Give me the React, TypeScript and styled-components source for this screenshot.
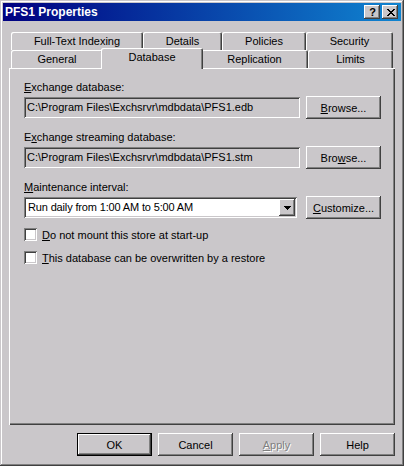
import React from "react";
import styled, { createGlobalStyle } from "styled-components";

const FACE = "#cac7ca";

const GlobalStyle = createGlobalStyle`
  html, body { margin: 0; padding: 0; background: ${FACE}; }
  body { font-family: "Liberation Sans", Arial, sans-serif; font-size: 11px; color: #000; }
  * { box-sizing: border-box; }
`;

const raisedShadow = `inset -1px -1px #404040, inset 1px 1px #ffffff, inset -2px -2px #808080, inset 2px 2px ${FACE}`;
const sunkenShadow = `inset 1px 1px #808080, inset -1px -1px #ffffff, inset 2px 2px #404040, inset -2px -2px ${FACE}`;

const Window = styled.div`
  width: 404px;
  height: 466px;
  padding: 3px;
  display: flex;
  flex-direction: column;
  background: ${FACE};
  box-shadow: inset -1px -1px #404040, inset 1px 1px ${FACE}, inset -2px -2px #808080, inset 2px 2px #ffffff;
`;

const TitleBar = styled.div`
  height: 18px;
  display: flex;
  align-items: center;
  padding: 0 3px 0 2px;
  background: linear-gradient(90deg, #000080 0%, #1084d0 100%);
`;

const Title = styled.span`
  color: #fff;
  font-weight: bold;
  font-size: 12px;
  line-height: 18px;
`;

const CaptionButtons = styled.div`
  margin-left: auto;
  display: flex;
  gap: 2px;
`;

const CaptionButton = styled.div`
  width: 16px;
  height: 14px;
  background: ${FACE};
  box-shadow: ${raisedShadow};
  display: flex;
  align-items: center;
  justify-content: center;
  font-weight: bold;
  font-size: 11px;
  line-height: 14px;
  padding-left: 1px;
`;

const TabStrip = styled.div`
  margin: 11px 6px 0;
  padding: 0 2px;
  display: flex;
  flex-direction: column;
`;

const TabRow = styled.div`
  height: 18px;
  display: flex;
  align-items: flex-start;
`;

const Tab = styled.div<{ $w: number; $selected?: boolean }>`
  width: ${(p) => p.$w}px;
  height: ${(p) => (p.$selected ? 21 : 18)}px;
  margin: ${(p) => (p.$selected ? "-2px -2px -1px -2px" : "0")};
  padding-bottom: ${(p) => (p.$selected ? 4 : 0)}px;
  position: ${(p) => (p.$selected ? "relative" : "static")};
  z-index: ${(p) => (p.$selected ? 1 : "auto")};
  background: ${FACE};
  display: flex;
  align-items: center;
  justify-content: center;
  white-space: nowrap;
  border-radius: 2px 2px 0 0;
  box-shadow: inset 1px 1px #ffffff, inset -1px 0 #404040, inset -2px 0 #808080;
`;

const Panel = styled.div`
  margin: 0 6px;
  height: 357px;
  background: ${FACE};
  box-shadow: inset 1px 1px #ffffff, inset -1px -1px #404040, inset -2px -2px #808080;
  padding: 13px 14px 0 15px;
  display: flex;
  flex-direction: column;
`;

const Label = styled.div<{ $top?: number }>`
  line-height: 13px;
  height: 13px;
  margin-top: ${(p) => p.$top ?? 0}px;
  margin-bottom: 2px;
  white-space: nowrap;
`;

const Key = styled.span`
  text-decoration: underline;
  text-underline-offset: 1px;
`;

const FieldRow = styled.div`
  height: 23px;
  display: flex;
  align-items: center;
  justify-content: space-between;
`;

const Field = styled.div`
  width: 276px;
  height: 21px;
  background: ${FACE};
  box-shadow: ${sunkenShadow};
  padding: 0 3px;
  line-height: 21px;
  white-space: nowrap;
  overflow: hidden;
`;

const Combo = styled.div`
  width: 273px;
  height: 21px;
  background: #fff;
  box-shadow: ${sunkenShadow};
  padding: 2px 2px 2px 4px;
  display: flex;
  align-items: center;
`;

const ComboText = styled.span`
  flex: 1;
  line-height: 17px;
  white-space: nowrap;
  letter-spacing: -0.15px;
`;

const DropButton = styled.div`
  width: 16px;
  height: 17px;
  background: ${FACE};
  box-shadow: ${raisedShadow};
  display: flex;
  align-items: center;
  justify-content: center;
`;

const Button = styled.div<{ $default?: boolean; $disabled?: boolean }>`
  width: 75px;
  height: 23px;
  background: ${FACE};
  display: flex;
  align-items: center;
  justify-content: center;
  white-space: nowrap;
  color: ${(p) => (p.$disabled ? "#808080" : "#000")};
  text-shadow: ${(p) => (p.$disabled ? "1px 1px 0 #ffffff" : "none")};
  box-shadow: ${(p) =>
    p.$default
      ? `inset 0 0 0 1px #000, inset -2px -2px #404040, inset 2px 2px #ffffff, inset -3px -3px #808080`
      : raisedShadow};
`;

const CheckRow = styled.div<{ $top: number }>`
  height: 17px;
  margin-top: ${(p) => p.$top}px;
  display: flex;
  align-items: center;
  gap: 5px;
  white-space: nowrap;
`;

const CheckBox = styled.div`
  width: 13px;
  height: 13px;
  background: #fff;
  box-shadow: ${sunkenShadow};
`;

const ButtonBar = styled.div`
  margin: 8px 6px 0 0;
  display: flex;
  justify-content: flex-end;
  gap: 6px;
`;

export default function App() {
  return (
    <>
      <GlobalStyle />
      <Window>
        <TitleBar>
          <Title>PFS1 Properties</Title>
          <CaptionButtons>
            <CaptionButton>?</CaptionButton>
            <CaptionButton>
              <svg width="8" height="7" viewBox="0 0 8 7" shapeRendering="crispEdges">
                <path d="M0 0h2v1h1v1h2v-1h1v-1h2v1h-1v1h-1v1h-1v1h1v1h1v1h1v1h-2v-1h-1v-1h-2v1h-1v1h-2v-1h1v-1h1v-1h1v-1h-1v-1h-1v-1h-1z" fill="#000" />
              </svg>
            </CaptionButton>
          </CaptionButtons>
        </TitleBar>

        <TabStrip>
          <TabRow>
            <Tab $w={132}>Full-Text Indexing</Tab>
            <Tab $w={79}>Details</Tab>
            <Tab $w={84}>Policies</Tab>
            <Tab $w={87}>Security</Tab>
          </TabRow>
          <TabRow>
            <Tab $w={92}>General</Tab>
            <Tab $w={102} $selected>Database</Tab>
            <Tab $w={107}>Replication</Tab>
            <Tab $w={85}>Limits</Tab>
          </TabRow>
        </TabStrip>

        <Panel>
          <Label>
            <Key>E</Key>xchange database:
          </Label>
          <FieldRow>
            <Field>C:\Program Files\Exchsrvr\mdbdata\PFS1.edb</Field>
            <Button>
              <Key>B</Key>rowse...
            </Button>
          </FieldRow>

          <Label $top={12}>
            E<Key>x</Key>change streaming database:
          </Label>
          <FieldRow>
            <Field>C:\Program Files\Exchsrvr\mdbdata\PFS1.stm</Field>
            <Button>
              Bro<Key>w</Key>se...
            </Button>
          </FieldRow>

          <Label $top={12}>
            <Key>M</Key>aintenance interval:
          </Label>
          <FieldRow>
            <Combo>
              <ComboText>Run daily from 1:00 AM to 5:00 AM</ComboText>
              <DropButton>
                <svg width="7" height="4" viewBox="0 0 7 4" shapeRendering="crispEdges">
                  <path d="M0 0h7v1h-1v1h-1v1h-1v1h-1v-1h-1v-1h-1v-1h-1z" fill="#000" />
                </svg>
              </DropButton>
            </Combo>
            <Button>
              <Key>C</Key>ustomize...
            </Button>
          </FieldRow>

          <CheckRow $top={7}>
            <CheckBox />
            <span>
              <Key>D</Key>o not mount this store at start-up
            </span>
          </CheckRow>
          <CheckRow $top={6}>
            <CheckBox />
            <span>
              <Key>T</Key>his database can be overwritten by a restore
            </span>
          </CheckRow>
        </Panel>

        <ButtonBar>
          <Button $default>OK</Button>
          <Button>Cancel</Button>
          <Button $disabled>
            <Key>A</Key>pply
          </Button>
          <Button>Help</Button>
        </ButtonBar>
      </Window>
    </>
  );
}
